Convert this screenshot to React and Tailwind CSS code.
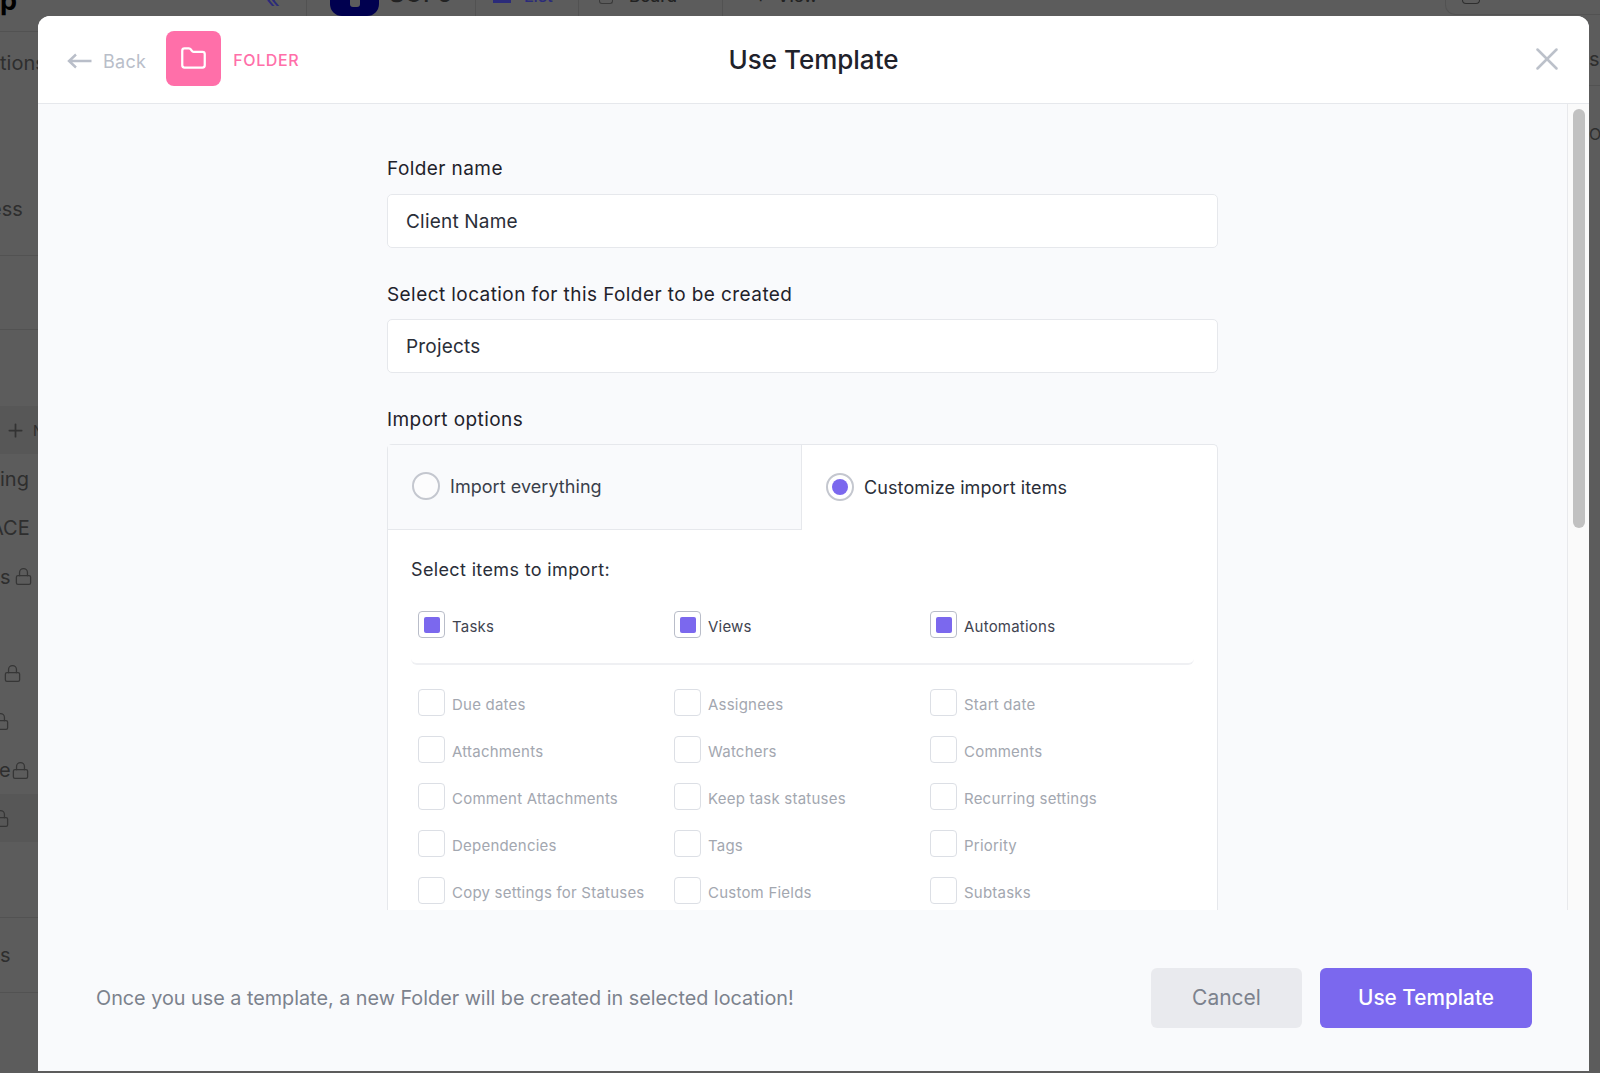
import React from 'react';
import { Folder, Lock, Plus, X } from 'lucide-react';

const mainItems = ['Tasks', 'Views', 'Automations'];

const subItems = [
    'Due dates', 'Assignees', 'Start date',
    'Attachments', 'Watchers', 'Comments',
    'Comment Attachments', 'Keep task statuses', 'Recurring settings',
    'Dependencies', 'Tags', 'Priority',
    'Copy settings for Statuses', 'Custom Fields', 'Subtasks',
];

const LockIcon = () => <Lock size={19} strokeWidth={1.6} className="shrink-0 text-[#363636]" />;

const Sidebar = () => (
    <div className="w-[38px] shrink-0 overflow-hidden text-[20px] text-[#2e2e2e]">
        <div className="flex h-[32px] items-start border-b border-[#525252]">
            <span className="-mt-[15px] text-[27px] leading-[32px] font-bold text-black">p</span>
        </div>
        <div className="mt-[7px] flex h-[48px] items-center whitespace-nowrap">tions</div>
        <div className="mt-[98px] -ml-[10px] flex h-[48px] items-center">ess</div>
        <div className="h-[23px] border-b border-[#525252]" />
        <div className="h-[74px] border-b border-[#525252]" />
        <div className="mt-[76px] flex h-[48px] items-center gap-[7px] bg-[#575757] pl-[5px]">
            <Plus size={21} className="shrink-0 text-[#333333]" />
            <span className="text-[14px]">N</span>
        </div>
        <div className="flex h-[49px] items-center">ing</div>
        <div className="-ml-[10px] flex h-[49px] items-center whitespace-nowrap">ACE</div>
        <div className="flex h-[49px] items-center gap-[3px]"><span>s</span><LockIcon /></div>
        <div className="mt-[48px] flex h-[48px] items-center pl-[3px]"><LockIcon /></div>
        <div className="-ml-[9px] flex h-[49px] items-center"><LockIcon /></div>
        <div className="-ml-[1px] flex h-[48px] items-center"><span>e</span><LockIcon /></div>
        <div className="flex h-[48px] items-center bg-[#575757]"><span className="-ml-[9px]"><LockIcon /></span></div>
        <div className="h-[76px] border-b border-[#525252]" />
        <div className="flex h-[75px] items-center border-b border-[#525252]">s</div>
    </div>
);

const TopBar = () => (
    <div className="flex h-[16px] items-start overflow-hidden pl-[258px] text-[#222222]">
        <div className="h-[16px] w-[49px] shrink-0 border-r border-[#525252] pl-[8px]">
            <span className="block -mt-[12px] text-[24px] leading-[24px] text-[#2b2b7a]">«</span>
        </div>
        <div className="ml-[23px] flex h-[16px] w-[49px] shrink-0 justify-center rounded-b-[12px] bg-[#00004f]">
            <span className="h-[7px] w-[10px] rounded-b-[3px] bg-[#5c5c5c]" />
        </div>
        <div className="h-[16px] w-[97px] shrink-0 border-r border-[#525252] pl-[10px]">
            <span className="block -mt-[19px] text-[24px] leading-[26px] font-medium">SOPs</span>
        </div>
        <div className="flex h-[16px] w-[103px] shrink-0 border-r border-[#525252] pl-[17px]">
            <span className="h-[3px] w-[18px] bg-[#2b2b7a]" />
            <span className="-mt-[14px] ml-[13px] text-[17px] leading-[20px] font-medium text-[#2b2b7a]">List</span>
        </div>
        <div className="flex h-[16px] w-[144px] shrink-0 border-r border-[#525252] pl-[20px]">
            <span className="h-[4px] w-[14px] rounded-b-[3px] border border-t-0 border-[#3a3a3a]" />
            <span className="-mt-[14px] ml-[16px] text-[17px] leading-[20px] font-medium">Board</span>
        </div>
        <div className="flex h-[16px] pl-[32px]">
            <span className="-mt-[14px] text-[17px] leading-[20px] font-medium">+</span>
            <span className="-mt-[14px] ml-[11px] text-[17px] leading-[20px] font-medium">View</span>
        </div>
        <div className="ml-auto flex h-[15px] w-[155px] shrink-0 rounded-bl-[10px] border-b border-l border-[#525252] pl-[16px]">
            <span className="h-[4px] w-[18px] rounded-b-[4px] border border-t-0 border-[#2e2e2e]" />
        </div>
    </div>
);

const CheckRow = ({ label, checked }) => (
    <div className="flex items-center">
        <span className={`flex h-[27px] w-[27px] shrink-0 items-center justify-center rounded-[4px] border ${checked ? 'border-[#b9bdc9] bg-white' : 'border-[#dcdfe5] bg-white'}`}>
            {checked && <span className="h-[16px] w-[16px] rounded-[2px] bg-[#7b68ee]" />}
        </span>
        <span className={`ml-[7px] pt-[5px] text-[15px] leading-[22px] tracking-[0.22px] ${checked ? 'text-[#3f4450]' : 'text-[#a3a7b0]'}`}>{label}</span>
    </div>
);

const App = () => {
    return (
        <div className="relative h-[1073px] w-[1600px] overflow-hidden bg-[#5c5c5c] font-['Inter',sans-serif]">
            {/* Dimmed page behind the dialog */}
            <TopBar />
            <div className="-mt-[16px] flex justify-between">
                <Sidebar />
                <div className="w-[11px] shrink-0 overflow-hidden text-[20px] leading-[28px] text-[#2e2e2e]">
                    <div className="h-[86px] border-b border-[#525252] pt-[45px]">s</div>
                    <div className="mt-[34px] text-[16px]">O</div>
                </div>
            </div>

            {/* Dialog */}
            <div className="absolute left-[38px] top-[16px] flex h-[1055px] w-[1551px] flex-col overflow-hidden rounded-t-[12px] bg-[#f9fafc]">
                <div className="relative flex h-[88px] shrink-0 items-center border-b border-[#e6e8ec] bg-white pl-[29px]">
                    <svg width="25" height="16" viewBox="0 0 25 16" fill="none" className="mt-[2px] shrink-0 text-[#b9bec9]">
                        <path d="M24.5 8H2M9 1.5 2 8l7 6.5" stroke="currentColor" strokeWidth="2.4" />
                    </svg>
                    <span className="ml-[11px] mt-[3px] text-[18px] tracking-[0.3px] text-[#b9bec9]">Back</span>
                    <div className="ml-[20px] -mt-[2px] flex h-[55px] w-[55px] items-center justify-center rounded-[8px] bg-[#ff6fa9]">
                        <Folder size={27} strokeWidth={2} className="text-white" />
                    </div>
                    <span className="ml-[12px] mt-[1px] text-[16px] font-medium tracking-[0.6px] text-[#ff6fa9]">FOLDER</span>
                    <h1 className="absolute left-[0px] right-[0px] top-[27px] text-center text-[26px] leading-[34px] font-medium text-[#1f222b]">Use Template</h1>
                    <X size={38} strokeWidth={1.6} className="absolute right-[23px] top-[24px] text-[#bcc1ca]" />
                </div>

                <div className="flex min-h-0 flex-1">
                    <div className="min-w-0 flex-1 overflow-hidden pl-[349px] pt-[52px]">
                        <div className="w-[831px] text-[#1f222b]">
                            <label className="block text-[19px] leading-[26px] tracking-[0.42px]">Folder name</label>
                            <div className="mt-[12px] flex h-[54px] items-center rounded-[5px] border border-[#e6e8ec] bg-white pl-[18px] pt-[2px] text-[19px] tracking-[0.2px] text-[#2a2e38]">Client Name</div>

                            <label className="mt-[34px] block text-[19px] leading-[26px] tracking-[0.42px]">Select location for this Folder to be created</label>
                            <div className="mt-[11px] flex h-[54px] items-center rounded-[5px] border border-[#e6e8ec] bg-white pl-[18px] pt-[2px] text-[19px] tracking-[0.2px] text-[#2a2e38]">Projects</div>

                            <label className="mt-[34px] block text-[19px] leading-[26px] tracking-[0.42px]">Import options</label>

                            <div className="mt-[11px] rounded-t-[5px] border border-b-0 border-[#e6e8ec] bg-white pb-[40px]">
                                <div className="flex h-[85px]">
                                    <div className="flex w-[414px] items-center border-r border-b border-[#e6e8ec] bg-[#f9fafc] pb-[2px] pl-[24px]">
                                        <span className="h-[28px] w-[28px] rounded-full border-2 border-[#c4c7cf] bg-[#fcfcfd]" />
                                        <span className="ml-[10px] text-[18px] tracking-[0.05px] text-[#3a3f4b]">Import everything</span>
                                    </div>
                                    <div className="flex flex-1 items-center pb-[2px] pl-[24px]">
                                        <span className="flex h-[28px] w-[28px] items-center justify-center rounded-full border-2 border-[#c4c7cf] bg-white">
                                            <span className="h-[16px] w-[16px] rounded-full bg-[#7b68ee]" />
                                        </span>
                                        <span className="ml-[10px] pt-[1px] text-[18px] tracking-[0.1px] text-[#2a2e38]">Customize import items</span>
                                    </div>
                                </div>

                                <div className="px-[23px] pt-[26px]">
                                    <h2 className="text-[18px] leading-[28px] tracking-[0.36px] text-[#2a2e38]">Select items to import:</h2>
                                    <div className="mt-[27px] grid grid-cols-[256px_256px_1fr] rounded-b-[6px] border-b-2 border-[#eff0f3] pb-[25px] pl-[7px]">
                                        {mainItems.map((item) => (
                                            <CheckRow key={item} label={item} checked />
                                        ))}
                                    </div>
                                    <div className="mt-[24px] grid grid-cols-[256px_256px_1fr] gap-y-[20px] pl-[7px]">
                                        {subItems.map((item) => (
                                            <CheckRow key={item} label={item} />
                                        ))}
                                    </div>
                                </div>
                            </div>
                        </div>
                    </div>

                    {/* Scrollbar */}
                    <div className="w-[22px] shrink-0 border-l border-[#e8e9ec] bg-[#fafafa] pl-[5px] pt-[5px]">
                        <div className="h-[419px] w-[12px] rounded-full bg-[#c1c1c1]" />
                    </div>
                </div>

                <div className="flex h-[161px] shrink-0 items-start bg-[#f9fafc] pl-[58px] pr-[57px] pt-[58px]">
                    <p className="flex h-[60px] flex-1 items-center pt-[1px] text-[19.8px] text-[#7c828d]">Once you use a template, a new Folder will be created in selected location!</p>
                    <button className="h-[60px] w-[151px] rounded-[6px] bg-[#e9eaee] text-[21px] text-[#7c828d]">Cancel</button>
                    <button className="ml-[18px] h-[60px] w-[212px] rounded-[6px] bg-[#7b68ee] text-[20.8px] font-medium text-white">Use Template</button>
                </div>
            </div>
        </div>
    );
};

export default App;
